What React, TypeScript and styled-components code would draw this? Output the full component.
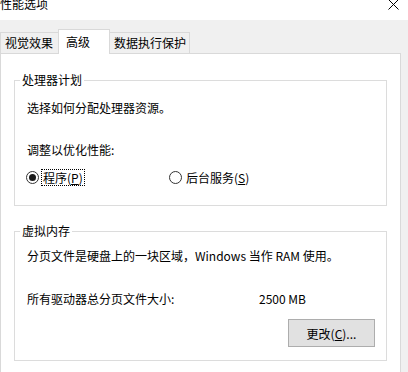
import React, { useState } from 'react';
import styled, { createGlobalStyle } from 'styled-components';

const GlobalStyle = createGlobalStyle`
  html, body {
    margin: 0;
    padding: 0;
    background: #ffffff;
    overflow: hidden;
  }
  body {
    font-family: "Noto Sans CJK SC", "Microsoft YaHei UI", sans-serif;
    font-size: 12px;
    color: #000;
  }
`;

const Window = styled.div`
  width: 408px;
  height: 372px;
  display: flex;
  flex-direction: column;
  background: #f0f0f0;
  overflow: hidden;
`;

const TitleBar = styled.div`
  height: 20px;
  flex: none;
  background: #ffffff;
  display: flex;
  align-items: flex-start;
  justify-content: space-between;
  padding-right: 9px;
`;

const Title = styled.span`
  margin-top: -4px;
  line-height: 16px;
  font-size: 12px;
`;

const CloseIcon = styled.svg`
  margin-top: -1px;
  display: block;
`;

const Body = styled.div`
  flex: 1;
  padding: 9px 7px 0 0;
  display: flex;
  flex-direction: column;
`;

const TabStrip = styled.div`
  display: flex;
  align-items: flex-end;
  height: 24px;
`;

const Tab = styled.button<{ $active?: boolean; $width: number; $pad: number }>`
  font: inherit;
  color: #000;
  box-sizing: border-box;
  width: ${p => p.$width}px;
  padding: 0 0 0 ${p => p.$pad}px;
  text-align: left;
  border: 1px solid #d9d9d9;
  background: ${p => (p.$active ? '#ffffff' : '#f0f0f0')};
  height: ${p => (p.$active ? 25 : 22)}px;
  line-height: ${p => (p.$active ? 18 : 20)}px;
  align-self: flex-start;
  margin-top: ${p => (p.$active ? 0 : 3)}px;
  margin-left: -1px;
  position: relative;
  z-index: ${p => (p.$active ? 2 : 1)};
  border-bottom: ${p => (p.$active ? 'none' : '1px solid #d9d9d9')};
  cursor: default;
  outline: none;
  &:first-child {
    margin-left: 0;
  }
`;

const Panel = styled.div`
  flex: 1;
  background: #ffffff;
  border: 1px solid #d9d9d9;
  border-bottom: none;
  padding: 18px 13px 0 13px;
  display: flex;
  flex-direction: column;
  gap: 17px;
`;

const Group = styled.fieldset<{ $padBottom: number; $padRight: number }>`
  margin: 0;
  border: 1px solid #dcdcdc;
  padding: 0 ${p => p.$padRight}px ${p => p.$padBottom}px 12px;
  min-width: 0;
`;

const Legend = styled.legend`
  margin-left: -7px;
  padding: 0 2px;
  line-height: 16px;
  font-size: 12px;
`;

const Line = styled.div<{ $gap: number }>`
  line-height: 16px;
  margin-top: ${p => p.$gap}px;
  white-space: nowrap;
`;

const RadioRow = styled.div`
  display: grid;
  grid-template-columns: 143px auto;
  margin-top: 11px;
  align-items: center;
`;

const RadioItem = styled.label`
  display: flex;
  align-items: center;
  gap: 2px;
  margin-left: -1px;
  cursor: default;
`;

const RadioCircle = styled.span<{ $checked: boolean }>`
  box-sizing: border-box;
  width: 13px;
  height: 13px;
  border-radius: 50%;
  border: 1px solid #333333;
  background: #ffffff;
  display: flex;
  align-items: center;
  justify-content: center;
  &::after {
    content: '';
    width: 7px;
    height: 7px;
    border-radius: 50%;
    background: ${p => (p.$checked ? '#1a1a1a' : 'transparent')};
  }
`;

const RadioLabel = styled.span<{ $focused: boolean }>`
  line-height: 15px;
  padding: 0 1px;
  border: 1px dotted ${p => (p.$focused ? '#000' : 'transparent')};
`;

const SizeRow = styled.div`
  display: grid;
  grid-template-columns: 232px auto;
  line-height: 16px;
  margin-top: 27px;
`;

const ButtonRow = styled.div`
  display: flex;
  justify-content: flex-end;
  margin-top: 12px;
`;

const Button = styled.button`
  font: inherit;
  color: #000;
  width: 87px;
  height: 28px;
  box-sizing: border-box;
  background: #e1e1e1;
  border: 1px solid #adadad;
  padding: 0;
  cursor: default;
`;

const tabs = [
  { label: '视觉效果', width: 59, pad: 4 },
  { label: '高级', width: 52, pad: 7 },
  { label: '数据执行保护', width: 81, pad: 4 },
];

const App: React.FC = () => {
  const [activeTab, setActiveTab] = useState(1);
  const [mode, setMode] = useState<'program' | 'service'>('program');

  return (
    <>
      <GlobalStyle />
      <Window>
        <TitleBar>
          <Title>性能选项</Title>
          <CloseIcon width="11" height="11" viewBox="0 0 11 11">
            <path d="M0.5 0.5 L10.5 10.5 M10.5 0.5 L0.5 10.5" stroke="#000" strokeWidth="1" fill="none" />
          </CloseIcon>
        </TitleBar>
        <Body>
          <TabStrip>
            {tabs.map((t, i) => (
              <Tab
                key={t.label}
                $active={i === activeTab}
                $width={t.width}
                $pad={t.pad}
                onClick={() => setActiveTab(i)}
              >
                {t.label}
              </Tab>
            ))}
          </TabStrip>
          <Panel>
            <Group $padBottom={19} $padRight={12}>
              <Legend>处理器计划</Legend>
              <Line $gap={12}>选择如何分配处理器资源。</Line>
              <Line $gap={26}>调整以优化性能:</Line>
              <RadioRow>
                <RadioItem onClick={() => setMode('program')}>
                  <RadioCircle $checked={mode === 'program'} />
                  <RadioLabel $focused={mode === 'program'}>
                    程序(<u>P</u>)
                  </RadioLabel>
                </RadioItem>
                <RadioItem onClick={() => setMode('service')}>
                  <RadioCircle $checked={mode === 'service'} />
                  <RadioLabel $focused={mode === 'service'}>
                    后台服务(<u>S</u>)
                  </RadioLabel>
                </RadioItem>
              </RadioRow>
            </Group>
            <Group $padBottom={13} $padRight={11}>
              <Legend>虚拟内存</Legend>
              <Line $gap={9}>分页文件是硬盘上的一块区域，Windows 当作 RAM 使用。</Line>
              <SizeRow>
                <span>所有驱动器总分页文件大小:</span>
                <span>2500 MB</span>
              </SizeRow>
              <ButtonRow>
                <Button>
                  更改(<u>C</u>)...
                </Button>
              </ButtonRow>
            </Group>
          </Panel>
        </Body>
      </Window>
    </>
  );
};

export default App;
